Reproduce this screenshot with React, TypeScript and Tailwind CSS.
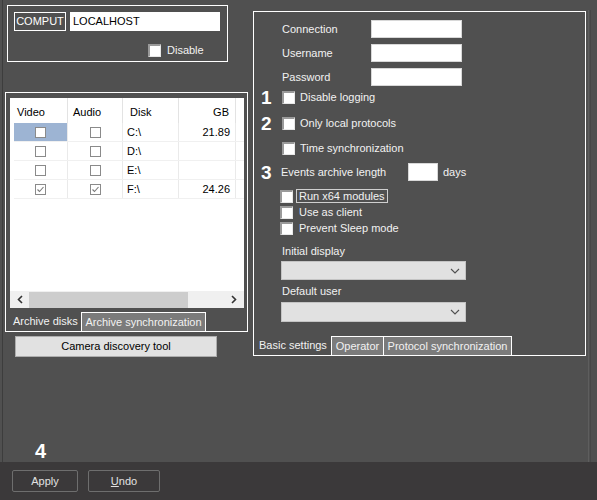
import React from "react";

function DarkCheck({ className = "" }: { className?: string }) {
  return (
    <div
      className={
        "w-[13px] h-[13px] bg-white border-t-2 border-l-2 border-[#9a9a9a] border-r border-b border-r-[#e8e8e8] border-b-[#e8e8e8] shrink-0 " +
        className
      }
    />
  );
}

function ListCheck({ checked = false }: { checked?: boolean }) {
  return (
    <div className="w-[11px] h-[11px] border border-[#8a8a8a] bg-white flex items-center justify-center">
      {checked && (
        <svg width="9" height="9" viewBox="0 0 9 9">
          <polyline points="1.5,4.5 3.5,6.5 7.5,2" fill="none" stroke="#7a7a7a" strokeWidth="1.1" />
        </svg>
      )}
    </div>
  );
}

function Chevron() {
  return (
    <svg width="10" height="6" viewBox="0 0 10 6">
      <polyline points="1,1 5,5 9,1" fill="none" stroke="#505050" strokeWidth="1.1" />
    </svg>
  );
}

const rows = [
  { disk: "C:\\", gb: "21.89", checked: false, sel: true },
  { disk: "D:\\", gb: "", checked: false, sel: false },
  { disk: "E:\\", gb: "", checked: false, sel: false },
  { disk: "F:\\", gb: "24.26", checked: true, sel: false },
];

export default function App() {
  return (
    <div className="w-[597px] h-[500px] bg-[#505050] flex flex-col font-['Liberation_Sans',Arial,sans-serif] text-[11px] text-[#f2f2f2] overflow-hidden">
      <div className="h-[462px] flex">
        <div className="w-[2px]" />
        <div className="w-px bg-[#3d3d3d]" />
        {/* Left column */}
        <div className="w-[247px] pl-[2px] pt-[5px] flex flex-col">
          <div className="ml-[2px] w-[221px] h-[57px] border border-white pl-[6px] pt-[6px] flex flex-col">
            <div className="flex items-center">
              <div className="w-[52px] h-[19px] border border-white flex items-center justify-center text-white">
                COMPUT
              </div>
              <div className="ml-[4px] w-[150px] h-[19px] bg-white text-black pl-[3px] flex items-center">
                LOCALHOST
              </div>
            </div>
            <div className="mt-[11px] ml-[134px] flex items-center gap-[6px]">
              <DarkCheck />
              <span>Disable</span>
            </div>
          </div>

          <div className="mt-[30px] w-[243px] h-[240px] border border-white flex flex-col pl-[4px] pr-[1px] pt-[5px]">
            <div className="w-[234px] h-[210px] bg-white flex flex-col text-black">
              <div className="flex-1 pl-[4px]">
                <div className="flex h-[25px]">
                  <div className="w-[54px] border-r border-[#e3e3e3] pl-[3px] pt-[6px]">Video</div>
                  <div className="w-[55px] border-r border-[#e3e3e3] pl-[5px] pt-[6px]">Audio</div>
                  <div className="w-[56px] border-r border-[#e3e3e3] pl-[7px] pt-[6px]">Disk</div>
                  <div className="w-[57px] border-r border-[#e3e3e3] pr-[6px] pt-[6px] text-right">GB</div>
                </div>
                {rows.map((r, i) => (
                  <div key={i} className="flex h-[19px] border-b border-[#f0f0f0]">
                    <div
                      className={
                        "w-[54px] border-r border-[#eaeaea] flex items-center justify-center " +
                        (r.sel ? "bg-[#9db4d3]" : "")
                      }
                    >
                      <ListCheck checked={r.checked} />
                    </div>
                    <div className="w-[55px] border-r border-[#eaeaea] flex items-center justify-center">
                      <ListCheck checked={r.checked} />
                    </div>
                    <div className="w-[56px] border-r border-[#eaeaea] flex items-center pl-[4px]">{r.disk}</div>
                    <div className="w-[57px] border-r border-[#eaeaea] flex items-center justify-end pr-[5px]">
                      {r.gb}
                    </div>
                  </div>
                ))}
              </div>
              <div className="h-[17px] bg-[#f0f0f0] flex items-center">
                <div className="w-[19px] flex items-center justify-center">
                  <svg width="6" height="9" viewBox="0 0 6 9">
                    <polyline points="5,1 1.5,4.5 5,8" fill="none" stroke="#333" strokeWidth="1.6" />
                  </svg>
                </div>
                <div className="w-[159px] h-[16px] bg-[#cdcdcd]" />
                <div className="flex-1 flex items-center justify-end pr-[7px]">
                  <svg width="6" height="9" viewBox="0 0 6 9">
                    <polyline points="1,1 4.5,4.5 1,8" fill="none" stroke="#333" strokeWidth="1.6" />
                  </svg>
                </div>
              </div>
            </div>
            <div className="flex-1 flex items-end -ml-[4px]">
              <div className="w-[75px] h-[20px] pl-[7px] flex items-center">Archive disks</div>
              <div className="w-[125px] h-[19px] bg-[#7b7b7b] border border-white border-b-0 flex items-center justify-center">
                Archive synchronization
              </div>
            </div>
          </div>

          <div className="mt-[4px] ml-[10px] w-[202px] h-[21px] bg-[#e1e1e1] border border-[#adadad] text-black flex items-center justify-center">
            Camera discovery tool
          </div>

          <div className="mt-auto ml-[30px] mb-[1px] text-white font-bold text-[20px] leading-none">4</div>
        </div>

        {/* Right column */}
        <div className="pt-[11px] pl-[3px]">
          <div className="w-[333px] h-[345px] border border-white flex flex-col">
            <div className="pt-[8px] flex flex-col">
              {["Connection", "Username", "Password"].map((l, i) => (
                <div key={l} className={"flex items-center h-[18px] pl-[28px] " + (i > 0 ? "mt-[6px]" : "")}>
                  <span className="w-[89px]">{l}</span>
                  <div className="w-[91px] h-[18px] bg-white border border-[#d8d8d8]" />
                </div>
              ))}

              <div className="mt-[1px] h-[20px] flex items-center pl-[7px]">
                <span className="w-[21px] font-bold text-[19px] leading-none text-white">1</span>
                <DarkCheck />
                <span className="ml-[5px]">Disable logging</span>
              </div>
              <div className="mt-[6px] h-[20px] flex items-center pl-[7px]">
                <span className="w-[21px] font-bold text-[19px] leading-none text-white">2</span>
                <DarkCheck />
                <span className="ml-[5px]">Only local protocols</span>
              </div>
              <div className="mt-[5px] h-[20px] flex items-center pl-[28px]">
                <DarkCheck />
                <span className="ml-[5px]">Time synchronization</span>
              </div>
              <div className="mt-[4px] h-[20px] flex items-center pl-[7px]">
                <span className="w-[20px] font-bold text-[19px] leading-none text-white">3</span>
                <span className="w-[127px]">Events archive length</span>
                <div className="w-[30px] h-[18px] bg-white border border-[#d8d8d8]" />
                <span className="ml-[5px]">days</span>
              </div>
              <div className="mt-[7px] h-[14px] flex items-center pl-[26px]">
                <DarkCheck />
                <span className="ml-[3px] border border-[#cfcfcf] px-[2px] leading-[12px]">Run x64 modules</span>
              </div>
              <div className="mt-[2px] h-[14px] flex items-center pl-[26px]">
                <DarkCheck />
                <span className="ml-[6px]">Use as client</span>
              </div>
              <div className="mt-[2px] h-[14px] flex items-center pl-[26px]">
                <DarkCheck />
                <span className="ml-[6px]">Prevent Sleep mode</span>
              </div>

              <div className="mt-[9px] h-[14px] flex items-center pl-[28px]">Initial display</div>
              <div className="mt-[3px] ml-[27px] w-[185px] h-[19px] bg-[#e1e1e1] border border-[#c4c4c4] flex items-center justify-end pr-[5px]">
                <Chevron />
              </div>
              <div className="mt-[4px] h-[14px] flex items-center pl-[28px]">Default user</div>
              <div className="mt-[4px] ml-[27px] w-[185px] h-[20px] bg-[#e1e1e1] border border-[#c4c4c4] flex items-center justify-end pr-[5px]">
                <Chevron />
              </div>
            </div>

            <div className="mt-auto flex items-end pl-[3px]">
              <div className="w-[74px] h-[20px] pl-[2px] flex items-center">Basic settings</div>
              <div className="w-[53px] h-[19px] bg-[#7b7b7b] border border-white border-b-0 flex items-center justify-center">
                Operator
              </div>
              <div className="w-[128px] h-[19px] bg-[#7b7b7b] border border-white border-b-0 border-l-0 flex items-center justify-center">
                Protocol synchronization
              </div>
            </div>
          </div>
        </div>
        <div className="ml-[2px] mt-[10px] w-px bg-[#5e5e5e]" />
        <div className="ml-[1px] mt-[10px] w-px bg-[#474747]" />
      </div>

      <div className="h-[38px] bg-[#3b393a] flex items-start pt-[8px]">
        <div className="ml-[12px] w-[66px] h-[22px] border border-[#6e6e6e] rounded-[2px] flex items-center justify-center text-[#e2e2e2]">
          Apply
        </div>
        <div className="ml-[10px] w-[72px] h-[22px] border border-[#6e6e6e] rounded-[2px] flex items-center justify-center text-[#e2e2e2]">
          <span>
            <span className="underline">U</span>ndo
          </span>
        </div>
      </div>
    </div>
  );
}
